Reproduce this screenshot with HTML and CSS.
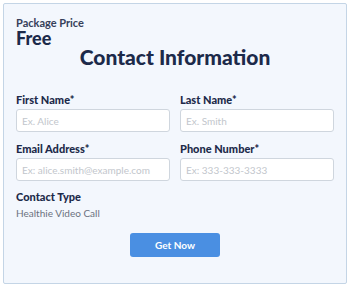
FILE: index.html
```html
<!doctype html>
<html>
<head>
<meta charset="utf-8">
<title>Contact Information</title>
<link rel="stylesheet" href="styles.css">
</head>
<body>
<div class="card">
	<p class="price-label">Package Price</p>
	<p class="price">Free</p>
	<h1 class="title">Contact Information</h1>

	<div class="fields">
		<div class="field">
			<label>First Name*</label>
			<input type="text" placeholder="Ex. Alice">
		</div>
		<div class="field">
			<label>Last Name*</label>
			<input type="text" placeholder="Ex. Smith">
		</div>
		<div class="field">
			<label>Email Address*</label>
			<input type="text" placeholder="Ex: alice.smith@example.com">
		</div>
		<div class="field">
			<label>Phone Number*</label>
			<input type="text" placeholder="Ex: 333-333-3333">
		</div>
	</div>

	<p class="type-label">Contact Type</p>
	<p class="type">Healthie Video Call</p>

	<div class="actions">
		<button class="btn">Get Now</button>
	</div>
</div>
</body>
</html>
```

FILE: styles.css
```css
* {padding:0;margin:0;box-sizing:border-box;}
body {
	background:#fff;
	font-family:Lato, "Open Sans", sans-serif;
	color:#1c2a4a;
}
.card {
	width:344px;
	height:281px;
	margin:3px;
	border:1px solid #c4d5e6;
	border-radius:2px;
	background:#f3f7fd;
	padding:12px 12px 0 12px;
}
.price-label {
	font-size:11px;
	font-weight:700;
	line-height:13px;
	color:#36405a;
}
.price {
	font-size:18px;
	font-weight:900;
	line-height:18px;
}
.title {
	font-size:21px;
	font-weight:900;
	line-height:24px;
	text-align:center;
	margin-top:-2px;
}
.fields {
	display:grid;
	grid-template-columns:1fr 1fr;
	column-gap:10px;
	row-gap:10px;
	margin-top:24px;
}
.field label {
	display:block;
	font-size:11px;
	font-weight:900;
	line-height:13px;
	margin-bottom:3px;
}
.field input {
	display:block;
	width:100%;
	height:23px;
	border:1px solid #cfd6de;
	border-radius:3px;
	background:#fff;
	padding:0 5px;
	font-family:Lato, sans-serif;
	font-size:10px;
	outline:none;
}
.field input::placeholder {
	color:#c2c6cc;
}
.type-label {
	font-size:11px;
	font-weight:900;
	line-height:13px;
	margin-top:9px;
}
.type {
	font-size:10px;
	line-height:12px;
	color:#6b7280;
	margin-top:4px;
}
.actions {
	display:flex;
	justify-content:center;
	margin-top:14px;
}
.btn {
	width:90px;
	height:24px;
	border:none;
	border-radius:3px;
	background:#4a8fe2;
	color:#fff;
	font-family:Lato, sans-serif;
	font-size:10px;
	font-weight:700;
}
```
